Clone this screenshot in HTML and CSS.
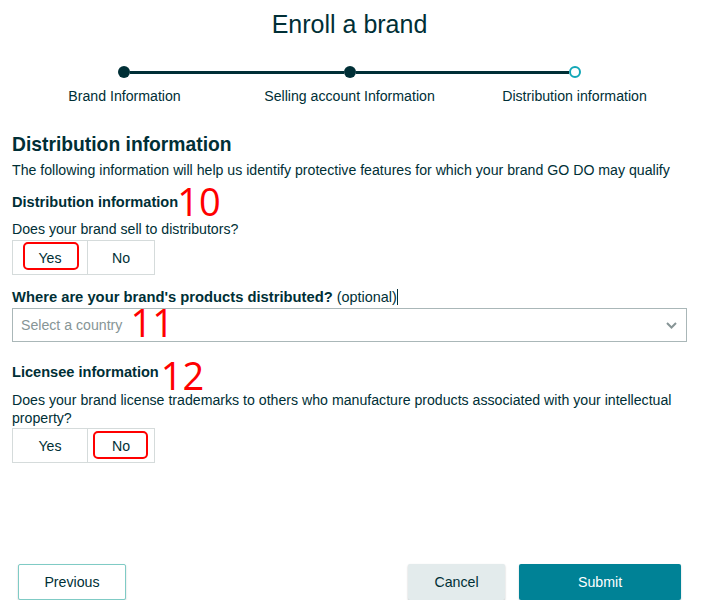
FILE: index.html
```html
<!DOCTYPE html>
<html lang="en">
<head>
<meta charset="utf-8">
<title>Enroll a brand</title>
<link rel="stylesheet" href="styles.css">
</head>
<body>
<div class="page">
  <h1 class="title">Enroll a brand</h1>

  <div class="stepper">
    <div class="track">
      <span class="dot"></span>
      <span class="bar"></span>
      <span class="dot"></span>
      <span class="bar"></span>
      <span class="dot current"></span>
    </div>
    <div class="labels">
      <span>Brand Information</span>
      <span>Selling account Information</span>
      <span>Distribution information</span>
    </div>
  </div>

  <h2 class="heading">Distribution information</h2>
  <p class="desc">The following information will help us identify protective features for which your brand GO DO may qualify</p>

  <h3 class="sub"><span class="anchor">Distribution information<span class="mark mark-10">10</span></span></h3>
  <p class="question">Does your brand sell to distributors?</p>
  <div class="toggle">
    <button class="opt opt-first marked mark-yes">Yes</button>
    <button class="opt opt-second">No</button>
  </div>

  <p class="field-label">Where are your brand's products distributed? <span class="optional">(optional)</span><span class="caret"></span></p>
  <div class="select">
    <span class="placeholder anchor">Select a country<span class="mark mark-11">11</span></span>
    <svg class="chevron" width="11" height="7" viewBox="0 0 11 7" aria-hidden="true"><path d="M1 1 L5.5 5.5 L10 1" fill="none" stroke="#879596" stroke-width="2"/></svg>
  </div>

  <h3 class="sub sub-licensee"><span class="anchor">Licensee information<span class="mark mark-12">12</span></span></h3>
  <p class="question question-long">Does your brand license trademarks to others who manufacture products associated with your intellectual property?</p>
  <div class="toggle toggle-tight">
    <button class="opt opt-first">Yes</button>
    <button class="opt opt-second marked mark-no">No</button>
  </div>

  <div class="footer">
    <button class="btn btn-prev">Previous</button>
    <div class="actions">
      <button class="btn btn-cancel">Cancel</button>
      <button class="btn btn-submit">Submit</button>
    </div>
  </div>
</div>
</body>
</html>
```

FILE: styles.css
```css
* { box-sizing: border-box; }

body {
  margin: 0;
  background: #ffffff;
  color: #002f36;
  font-family: "Liberation Sans", Arial, sans-serif;
  font-size: 14.15px;
  line-height: 18px;
}

.page {
  width: 675px;
  margin-left: 12px;
}

.title {
  margin: 9px 0 0;
  font-size: 25px;
  line-height: 30px;
  font-weight: 400;
  text-align: center;
}

.track {
  display: flex;
  align-items: center;
  height: 12px;
  margin-top: 27px;
  padding: 0 106px;
}

.dot {
  flex: none;
  width: 12px;
  height: 12px;
  border-radius: 50%;
  background: #002f36;
}

.dot.current {
  background: #ffffff;
  border: 2.5px solid #12a7b7;
}

.bar {
  flex: 1;
  height: 3px;
  background: #002f36;
}

.labels {
  display: grid;
  grid-template-columns: repeat(3, 1fr);
  margin-top: 9px;
  text-align: center;
}

.heading {
  margin: 28px 0 0;
  font-size: 19.3px;
  line-height: 24px;
  font-weight: 700;
}

.desc {
  margin: 4px 0 0;
}

.sub {
  margin: 14px 0 0;
  font-size: 14.6px;
  line-height: 18px;
  font-weight: 700;
}

.sub-licensee {
  margin-top: 21px;
}

.anchor {
  position: relative;
  display: inline-block;
}

.mark {
  position: absolute;
  font-family: "Open Sans", "Noto Sans", sans-serif;
  font-size: 38px;
  line-height: 22px;
  font-weight: 400;
  color: #ff0000;
  white-space: nowrap;
}

.mark-10 { left: calc(100% - 1px); top: -3px; }
.mark-11 { left: calc(100% + 8px); top: -5px; }
.mark-12 { left: calc(100% + 2px); top: 1px; }

.question {
  margin: 9px 0 0;
}

.question-long {
  margin-top: 10px;
}

.toggle {
  display: flex;
  width: 143px;
  height: 35px;
  margin-top: 2px;
  border: 1px solid #d5dbdb;
}

.toggle-tight {
  margin-top: 1px;
}

.opt {
  position: relative;
  padding: 0;
  border: none;
  background: #ffffff;
  color: #002f36;
  font: inherit;
}

.opt-first {
  flex: 0 0 74px;
}

.opt-second {
  flex: 1;
  border-left: 1px solid #d5dbdb;
}

.opt.marked::after {
  content: "";
  position: absolute;
  border: 2.5px solid #ff0000;
  border-radius: 5px;
}

.mark-yes::after { left: 10px; right: 8px; top: 1px; bottom: 4px; }
.mark-no::after { left: 5px; right: 6px; top: 2px; bottom: 3px; }

.field-label {
  margin: 13px 0 0;
  font-size: 14.75px;
  font-weight: 700;
}

.optional {
  font-size: 14.4px;
  font-weight: 400;
}

.caret {
  display: inline-block;
  width: 1px;
  height: 16px;
  margin-left: 0;
  vertical-align: -3px;
  background: #002f36;
}

.select {
  display: flex;
  align-items: center;
  justify-content: space-between;
  height: 34px;
  margin-top: 2px;
  padding: 0 9px 0 8px;
  border: 1px solid #aab7b8;
}

.placeholder {
  color: #879596;
}

.chevron {
  display: block;
}

.footer {
  display: flex;
  align-items: center;
  margin: 101px 6px 0;
}

.actions {
  display: flex;
  gap: 14px;
  margin-left: auto;
}

.btn {
  height: 36px;
  padding: 0;
  border: none;
  border-radius: 2px;
  font-family: "Liberation Sans", Arial, sans-serif;
  font-size: 14.2px;
  font-weight: 400;
  color: #002f36;
}

.btn-prev {
  width: 108px;
  background: #ffffff;
  border: 1px solid #7fcbc5;
  box-shadow: 0 1px 2px rgba(0, 0, 0, 0.2);
}

.btn-cancel {
  width: 97px;
  background: #e3ebec;
  box-shadow: 0 1px 2px rgba(0, 0, 0, 0.25);
}

.btn-submit {
  width: 162px;
  background: #008296;
  color: #ffffff;
  box-shadow: 0 1px 2px rgba(0, 0, 0, 0.2);
}
```
